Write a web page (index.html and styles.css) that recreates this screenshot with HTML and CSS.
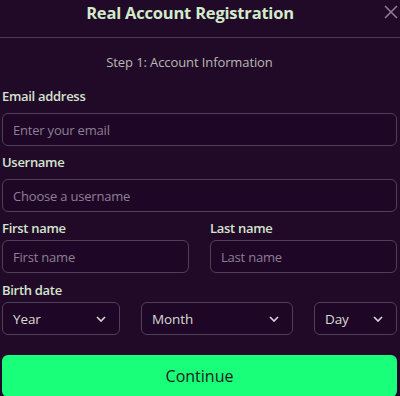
FILE: index.html
```html
<!DOCTYPE html>
<html>
<head>
<meta charset="utf-8">
<link rel="stylesheet" href="styles.css">
</head>
<body>
<div class="modal">
  <header class="header">
    <h1 class="title">Real Account Registration</h1>
    <button class="close" aria-label="Close">
      <svg width="14" height="14" viewBox="0 0 14 14"><path d="M1 1L13 13M13 1L1 13" stroke="#8c7d94" stroke-width="1.6" fill="none"/></svg>
    </button>
  </header>
  <div class="body">
    <p class="step">Step 1: Account Information</p>
    <div class="field">
      <label class="label">Email address</label>
      <input class="input" placeholder="Enter your email">
    </div>
    <div class="field">
      <label class="label">Username</label>
      <input class="input" placeholder="Choose a username">
    </div>
    <div class="row">
      <div class="field tight">
        <label class="label">First name</label>
        <input class="input" placeholder="First name">
      </div>
      <div class="field tight">
        <label class="label">Last name</label>
        <input class="input" placeholder="Last name">
      </div>
    </div>
    <div class="field tight">
      <label class="label">Birth date</label>
      <div class="selects">
        <div class="select year"><span>Year</span><svg width="10" height="6" viewBox="0 0 10 6"><path d="M1 1L5 5L9 1" stroke="#d8d8d8" stroke-width="1.6" fill="none"/></svg></div>
        <div class="select month"><span>Month</span><svg width="10" height="6" viewBox="0 0 10 6"><path d="M1 1L5 5L9 1" stroke="#d8d8d8" stroke-width="1.6" fill="none"/></svg></div>
        <div class="select day"><span>Day</span><svg width="10" height="6" viewBox="0 0 10 6"><path d="M1 1L5 5L9 1" stroke="#d8d8d8" stroke-width="1.6" fill="none"/></svg></div>
      </div>
    </div>
    <button class="continue">Continue</button>
  </div>
</div>
</body>
</html>
```
FILE: styles.css
```css
* { box-sizing: border-box; }
html, body { margin: 0; padding: 0; }
body {
  background: #200a28;
  font-family: "Open Sans", "Noto Sans", sans-serif;
  width: 400px;
  height: 396px;
  overflow: hidden;
}
.header {
  position: relative;
  height: 38px;
  border-bottom: 1px solid #4b3b52;
  display: flex;
  justify-content: center;
  align-items: flex-start;
  padding-right: 20px;
}
.title {
  margin: 0;
  font-size: 16.5px;
  font-weight: 700;
  line-height: 26px;
  color: #d3ebcb;
  letter-spacing: -0.2px;
}
.close {
  position: absolute;
  right: 2px;
  top: 5px;
  width: 14px;
  height: 14px;
  padding: 0;
  border: 0;
  background: none;
  display: flex;
}
.body {
  padding: 14px 3px 0 2px;
}
.step {
  margin: 0 0 14px;
  padding-right: 20px;
  text-align: center;
  font-size: 13px;
  line-height: 20px;
  color: #b9b9b2;
  letter-spacing: -0.1px;
}
.field {
  display: flex;
  flex-direction: column;
  margin-bottom: 6px;
  min-width: 0;
}
.field.tight { margin-bottom: 7px; }
.label {
  font-size: 13px;
  font-weight: 600;
  line-height: 20px;
  color: #d6e3cf;
  margin-bottom: 7px;
  letter-spacing: -0.3px;
}
.field.tight .label { margin-bottom: 2px; }
.selects-field .label { margin-bottom: 3px; }
.input {
  width: 100%;
  min-width: 0;
  height: 33px;
  border: 1px solid #4e4058;
  border-radius: 6px;
  background: #1e0726;
  padding: 0 10px;
  font-family: inherit;
  font-size: 13px;
  letter-spacing: -0.2px;
  color: #ddd;
  outline: none;
}
.input::placeholder { color: #8d7f95; }
.row {
  display: grid;
  grid-template-columns: 1fr 1fr;
  column-gap: 21px;
}
.selects {
  display: flex;
  gap: 21px;
}
.select {
  height: 33px;
  border: 1px solid #4e4058;
  border-radius: 6px;
  background: #1e0726;
  padding: 0 13px 0 10px;
  display: flex;
  align-items: center;
  justify-content: space-between;
  font-size: 13.5px;
  letter-spacing: -0.1px;
  color: #d9dad3;
}
.year { width: 118px; }
.month { width: 152px; }
.day { flex: 1; }
.continue {
  margin-top: 13px;
  width: 100%;
  height: 42px;
  border: 0;
  border-radius: 6px;
  background: #19ff7a;
  font-family: inherit;
  font-size: 16px;
  color: #1b1b1b;
}
```
